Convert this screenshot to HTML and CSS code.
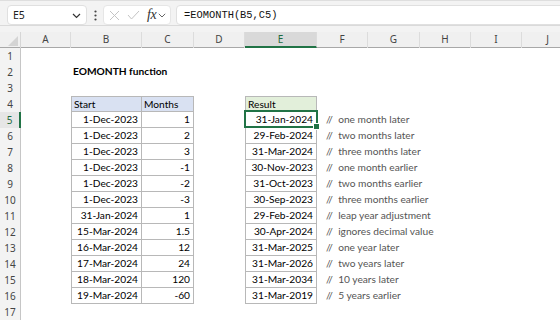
FILE: index.html
```html
<!DOCTYPE html>
<html>
<head>
<meta charset="utf-8">
<link rel="stylesheet" href="styles.css">
</head>
<body>
<div class="fbar">
  <div class="namebox"><span class="nb-text">E5</span>
    <svg class="chev" width="9" height="6" viewBox="0 0 9 6"><path d="M1 1 L4.5 4.5 L8 1" fill="none" stroke="#333" stroke-width="1.2"/></svg>
  </div>
  <svg class="dots" width="3" height="11" viewBox="0 0 3 11"><circle cx="1.5" cy="1.5" r="1.1" fill="#444"/><circle cx="1.5" cy="5.5" r="1.1" fill="#444"/><circle cx="1.5" cy="9.5" r="1.1" fill="#444"/></svg>
  <div class="fnbox">
    <svg class="ico-x" width="11" height="11" viewBox="0 0 11 11"><path d="M1 1 L10 10 M10 1 L1 10" stroke="#c4c4c4" stroke-width="1"/></svg>
    <svg class="ico-ok" width="13" height="10" viewBox="0 0 13 10"><path d="M1 5 L4.5 9 L12 1" fill="none" stroke="#c4c4c4" stroke-width="1"/></svg>
    <span class="fx">fx</span>
    <svg class="chev2" width="8" height="5" viewBox="0 0 8 5"><path d="M0.8 0.8 L4 4 L7.2 0.8" fill="none" stroke="#666" stroke-width="1"/></svg>
  </div>
  <div class="formula">=EOMONTH(B5,C5)</div>
</div>
<div class="strip"></div>
<div class="sheet">
  <div class="row colhdr">
    <div class="corner"></div>
    <div class="ch">A</div><div class="ch">B</div><div class="ch">C</div><div class="ch">D</div><div class="ch ch-sel">E</div><div class="ch">F</div><div class="ch">G</div><div class="ch">H</div><div class="ch">I</div><div class="ch">J</div>
  </div>
  <div class="row"><div class="rh">1</div></div>
  <div class="row"><div class="rh">2</div><div class="cell b title">EOMONTH function</div></div>
  <div class="row"><div class="rh">3</div></div>
  <div class="row"><div class="rh">4</div>
    <div class="cell b tb tl tt hd-blue">Start</div><div class="cell c tb tt hd-blue">Months</div>
    <div class="cell e tb tl tt hd-green">Result</div></div>
  <div class="row"><div class="rh rh-sel">5</div>
    <div class="cell b tb tl num">1-Dec-2023</div><div class="cell c tb num">1</div>
    <div class="cell e tb tl num sel">31-Jan-2024</div><div class="cell f cm">//&nbsp; one month later</div></div>
  <div class="row"><div class="rh">6</div>
    <div class="cell b tb tl num">1-Dec-2023</div><div class="cell c tb num">2</div>
    <div class="cell e tb tl num">29-Feb-2024</div><div class="cell f cm">//&nbsp; two months later</div></div>
  <div class="row"><div class="rh">7</div>
    <div class="cell b tb tl num">1-Dec-2023</div><div class="cell c tb num">3</div>
    <div class="cell e tb tl num">31-Mar-2024</div><div class="cell f cm">//&nbsp; three months later</div></div>
  <div class="row"><div class="rh">8</div>
    <div class="cell b tb tl num">1-Dec-2023</div><div class="cell c tb num">-1</div>
    <div class="cell e tb tl num">30-Nov-2023</div><div class="cell f cm">//&nbsp; one month earlier</div></div>
  <div class="row"><div class="rh">9</div>
    <div class="cell b tb tl num">1-Dec-2023</div><div class="cell c tb num">-2</div>
    <div class="cell e tb tl num">31-Oct-2023</div><div class="cell f cm">//&nbsp; two months earlier</div></div>
  <div class="row"><div class="rh">10</div>
    <div class="cell b tb tl num">1-Dec-2023</div><div class="cell c tb num">-3</div>
    <div class="cell e tb tl num">30-Sep-2023</div><div class="cell f cm">//&nbsp; three months earlier</div></div>
  <div class="row"><div class="rh">11</div>
    <div class="cell b tb tl num">31-Jan-2024</div><div class="cell c tb num">1</div>
    <div class="cell e tb tl num">29-Feb-2024</div><div class="cell f cm">//&nbsp; leap year adjustment</div></div>
  <div class="row"><div class="rh">12</div>
    <div class="cell b tb tl num">15-Mar-2024</div><div class="cell c tb num">1.5</div>
    <div class="cell e tb tl num">30-Apr-2024</div><div class="cell f cm">//&nbsp; ignores decimal value</div></div>
  <div class="row"><div class="rh">13</div>
    <div class="cell b tb tl num">16-Mar-2024</div><div class="cell c tb num">12</div>
    <div class="cell e tb tl num">31-Mar-2025</div><div class="cell f cm">//&nbsp; one year later</div></div>
  <div class="row"><div class="rh">14</div>
    <div class="cell b tb tl num">17-Mar-2024</div><div class="cell c tb num">24</div>
    <div class="cell e tb tl num">31-Mar-2026</div><div class="cell f cm">//&nbsp; two years later</div></div>
  <div class="row"><div class="rh">15</div>
    <div class="cell b tb tl num">18-Mar-2024</div><div class="cell c tb num">120</div>
    <div class="cell e tb tl num">31-Mar-2034</div><div class="cell f cm">//&nbsp; 10 years later</div></div>
  <div class="row"><div class="rh">16</div>
    <div class="cell b tb tl num">19-Mar-2024</div><div class="cell c tb num">-60</div>
    <div class="cell e tb tl num">31-Mar-2019</div><div class="cell f cm">//&nbsp; 5 years earlier</div></div>
  <div class="row"><div class="rh">17</div></div>
</div>
</body>
</html>
```

FILE: styles.css
```css
* { box-sizing: border-box; margin: 0; padding: 0; }
html, body { width: 560px; height: 320px; overflow: hidden; background: #fff; }
body { font-family: Lato, "Noto Sans", sans-serif; color: #000; }

.fbar {
  height: 26px;
  background: #f3f3f3;
  border-top: 1px solid #dedede;
  border-bottom: 1px solid #dadada;
  display: flex;
  align-items: flex-start;
  padding: 4px 0 0 7px;
}
.namebox {
  width: 80px; height: 20px;
  background: #fff;
  border: 1px solid #e0e0e0;
  border-radius: 4px;
  display: flex; align-items: center; justify-content: space-between;
  padding: 0 5px 0 5px;
  font-family: "Noto Sans", sans-serif; font-size: 10.5px; color: #222;
}
.chev { margin-top: 1px; }
.dots { margin: 5px 6px 0 7px; }
.fnbox {
  width: 68px; height: 20px;
  background: #fff;
  border: 1px solid #e6e6e6;
  border-radius: 4px;
  display: flex; align-items: center;
  padding-left: 5px;
}
.ico-x { margin-right: 7px; }
.ico-ok { margin-right: 7px; }
.fx {
  font-family: "Liberation Serif", "DejaVu Serif", serif;
  font-style: italic; font-size: 14px; color: #333;
  margin-right: 2px; line-height: 16px; letter-spacing: -0.5px;
}
.chev2 { margin-top: 1px; }
.formula {
  flex: 1;
  margin-left: 5px; margin-right: -10px;
  height: 20px;
  background: #fff;
  border: 1px solid #e0e0e0;
  border-radius: 4px;
  padding-left: 7px;
  font-family: "Liberation Mono", monospace; font-size: 10.4px;
  line-height: 18px; color: #111;
}
.strip { height: 6px; background: #f3f3f3; }

.row {
  display: grid;
  grid-template-columns: 21px 50px 71px 52px 51px 72px 51px 52px 51px 51px 52px;
  height: 16px;
}
.colhdr { height: 16px; background: #f0f0f0; border-bottom: 1px solid #a8a8a8; }
.corner { position: relative; border-right: 1px solid #d6d6d6; }
.corner::after {
  content: ""; position: absolute; right: 2px; bottom: 2px;
  border-left: 10px solid transparent; border-bottom: 10px solid #d4d4d4;
}
.ch {
  font-family: "Noto Sans", sans-serif; font-size: 10px; color: #444;
  text-align: center; line-height: 15px;
  border-right: 1px solid #dcdcdc;
}
.ch-sel { background: #d9d9d9; color: #1e6b41; border-bottom: 2px solid #217346; line-height: 14px; }

.rh {
  grid-column: 1;
  background: #f3f3f3;
  border-right: 1px solid #c6c6c6;
  font-family: "Noto Sans", sans-serif; font-size: 10px; color: #444;
  text-align: center; line-height: 16px;
}
.rh-sel { color: #1e6b41; border-right: 2px solid #217346; background: #e6e6e6; }

.cell { font-size: 10.2px; line-height: 15px; white-space: nowrap; padding: 0 3px 0 2px; }
.b { grid-column: 3; }
.c { grid-column: 4; }
.e { grid-column: 6; }
.f { grid-column: 7 / span 5; }
.title { grid-column: 3 / span 3; font-weight: bold; }
.tb { border-right: 1px solid #b8b8b8; border-bottom: 1px solid #b8b8b8; }
.tl { border-left: 1px solid #b8b8b8; }
.tt { border-top: 1px solid #b8b8b8; line-height: 14px; }
.hd-blue { background: #d9e1f2; }
.hd-green { background: #e2efda; }
.num { text-align: right; }
.cm { color: #555; padding-left: 9px; }
.sel { position: relative; }
.sel::after {
  content: ""; position: absolute; left: -2px; top: -2px; right: -2px; bottom: -1px;
  border: 2px solid #217346;
}
.sel::before {
  content: ""; position: absolute; right: -4px; bottom: -3px;
  width: 5px; height: 5px; background: #217346; border: 1px solid #fff; z-index: 2;
}
```
